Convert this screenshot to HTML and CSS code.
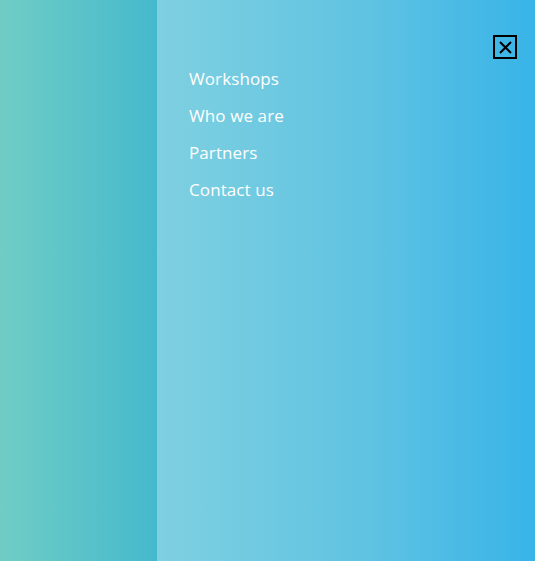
FILE: index.html
```html
<!DOCTYPE html>
<html lang="en">
<head>
<meta charset="utf-8">
<title>Menu</title>
<link rel="stylesheet" href="styles.css">
</head>
<body>
<div class="page">
  <div class="backdrop"></div>
  <nav class="drawer">
    <ul class="menu">
      <li><a href="#">Workshops</a></li>
      <li><a href="#">Who we are</a></li>
      <li><a href="#">Partners</a></li>
      <li><a href="#">Contact us</a></li>
    </ul>
    <button class="close" aria-label="Close menu">
      <svg width="13" height="13" viewBox="0 0 13 13"><path d="M1 1 L12 12 M12 1 L1 12" stroke="#000" stroke-width="2" fill="none"/></svg>
    </button>
  </nav>
</div>
</body>
</html>
```
FILE: styles.css
```css
html, body {
  margin: 0;
  padding: 0;
  height: 100%;
}
.page {
  display: flex;
  height: 561px;
  font-family: "Open Sans", "Noto Sans", sans-serif;
}
.backdrop {
  width: 157px;
  flex: none;
  background: linear-gradient(to right, #70cdc5, #45b9cc);
}
.drawer {
  flex: 1;
  position: relative;
  background: linear-gradient(to right, #7fd0e0, #60c3e2 55%, #38b4e8);
  padding: 67px 0 0 32px;
}
.menu {
  list-style: none;
  margin: 0;
  padding: 0;
  display: flex;
  flex-direction: column;
  gap: 14px;
}
.menu a {
  color: #fff;
  text-decoration: none;
  font-size: 17px;
  font-weight: 500;
  line-height: 23px;
  display: block;
  letter-spacing: 0.1px;
}
.close {
  position: absolute;
  top: 35px;
  right: 18px;
  width: 24px;
  height: 24px;
  border: 2px solid #000;
  background: transparent;
  padding: 0;
  display: flex;
  align-items: center;
  justify-content: center;
  box-sizing: border-box;
}
```
